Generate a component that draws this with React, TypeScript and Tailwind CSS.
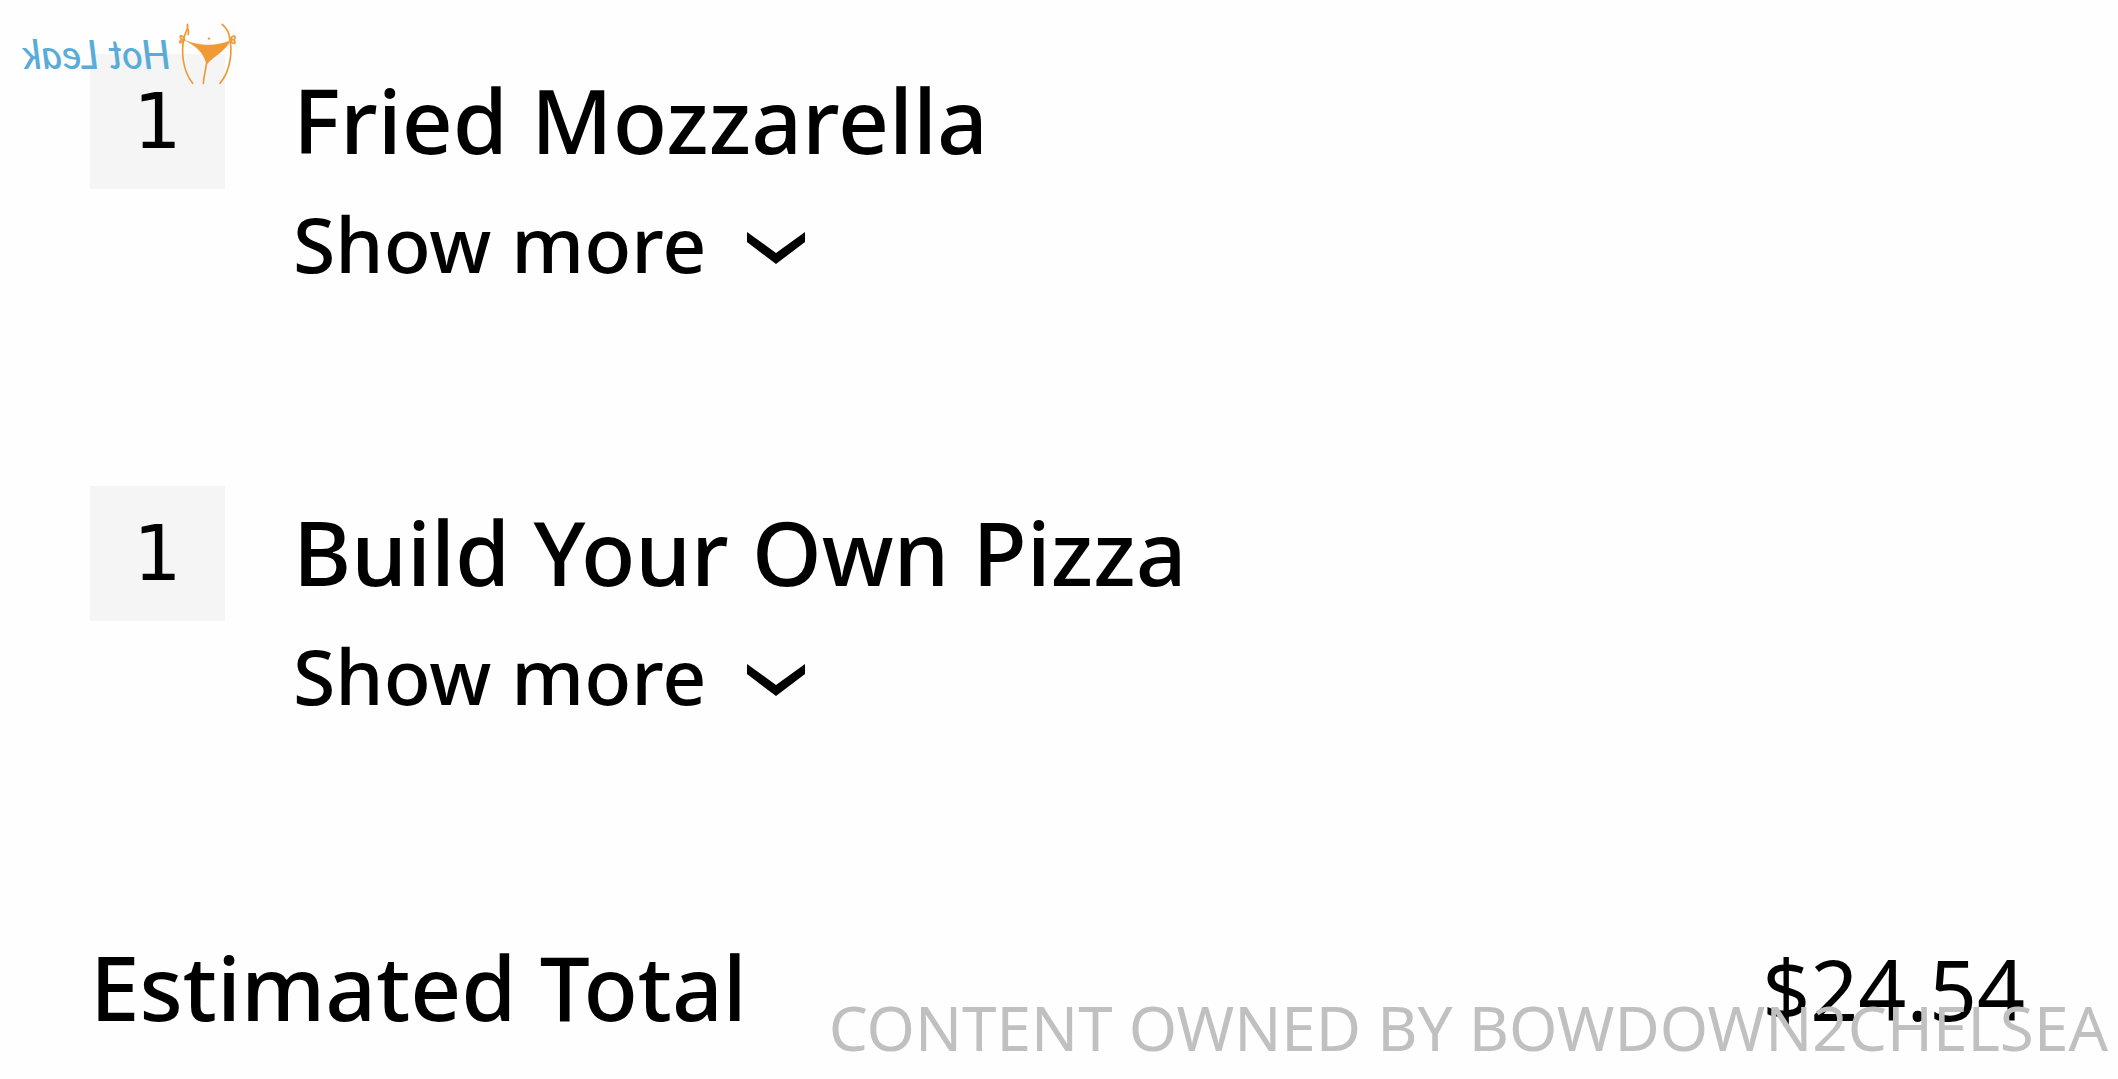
type Item = { id: string; quantity: number; name: string }

const items: Item[] = [
  { id: 'mozzarella', quantity: 1, name: 'Fried Mozzarella' },
  { id: 'pizza', quantity: 1, name: 'Build Your Own Pizza' },
]

function Chevron() {
  return (
    <svg viewBox="0 0 58 32" className="mt-2 w-[58px] h-8" fill="currentColor" aria-hidden="true">
      <path d="M0 0 L29 21 L58 0 V10 L29 32 L0 10 Z" />
    </svg>
  )
}

function OrderItem({ item }: { item: Item }) {
  return (
    <li className="flex items-start gap-[68px]">
      <div className="flex size-[135px] shrink-0 items-center justify-center bg-[#f5f5f5] font-['DejaVu_Sans',sans-serif] text-[76px]">
        {item.quantity}
      </div>
      <div className="flex flex-col items-start gap-6 pt-4">
        <h2 className="text-[89px] leading-[100px] font-medium">{item.name}</h2>
        <button type="button" className="flex items-center gap-10 text-[77px] leading-[100px] font-medium">
          Show more
          <Chevron />
        </button>
      </div>
    </li>
  )
}

function LogoMark() {
  return (
    <svg viewBox="0 0 180 190" className="w-[60px] h-[63px]" fill="none" stroke="#f09a36" strokeWidth="5" strokeLinecap="round" aria-hidden="true">
      <path d="M31 7 C27 16 39 26 33 38 M31 7 C35 20 25 30 22 42 C11 85 15 145 47 185" />
      <path d="M136 7 C148 18 155 27 157 42 C168 85 162 147 129 185" />
      <path d="M88 126 C86 148 80 162 79 185" />
      <path d="M25 56 C70 74 117 74 161 56 C145 88 112 102 89 128 C79 90 57 74 25 56 Z" fill="#f09a36" strokeWidth="1" />
      <path d="M22 52 C16 38 6 40 10 48 C14 54 18 54 22 52 C14 52 4 58 8 62 C14 64 18 58 22 54" />
      <path d="M160 52 C168 38 178 42 174 50 C170 54 166 54 160 52 C168 52 178 60 174 64 C166 66 162 58 160 52" />
      <path d="M96 47 V53 M93 50 H99" strokeWidth="3" />
    </svg>
  )
}

export default function App() {
  return (
    <div className="relative overflow-hidden bg-[#fefefe] font-['Noto_Sans',sans-serif] text-black">
      <main className="pt-[54px] pr-[93px] pb-10 pl-[90px]">
        <ul className="flex flex-col gap-48">
          {items.map(item => (
            <OrderItem key={item.id} item={item} />
          ))}
        </ul>
        <div className="flex items-baseline justify-between pt-[211px] leading-[100px]">
          <span className="text-[89px] font-medium">Estimated Total</span>
          <span className="text-[84px]">$24.54</span>
        </div>
      </main>

      {/* Logo, mirrored */}
      <div className="absolute top-[22px] left-[22px] flex items-center gap-1.5">
        <span className="-scale-x-100 font-['Lato',sans-serif] text-[40px] leading-[60px] font-medium text-[#5aacd8] italic">
          Hot Leak
        </span>
        <LogoMark />
      </div>

      {/* Watermark */}
      <p className="absolute right-2.5 bottom-3 text-[62px] leading-[80px] whitespace-nowrap text-[#c0c0c0]">
        CONTENT OWNED BY BOWDOWN2CHELSEA
      </p>
    </div>
  )
}
